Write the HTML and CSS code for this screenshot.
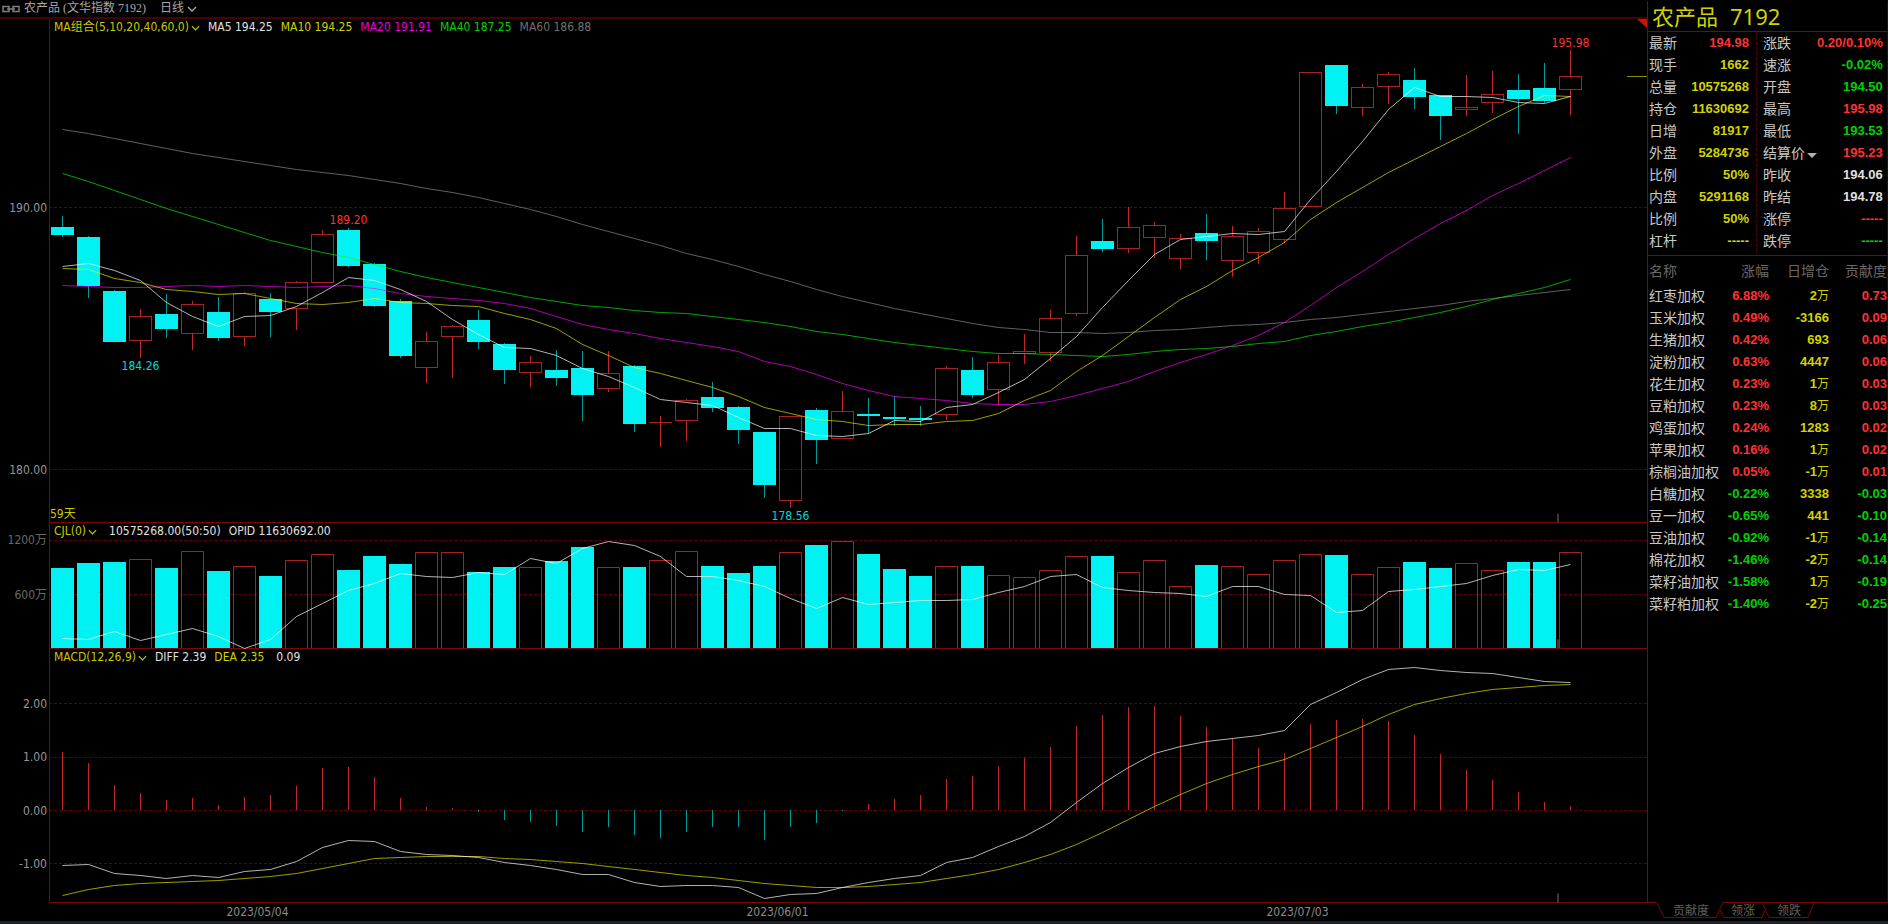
FILE: index.html
```html
<!DOCTYPE html>
<html lang="zh-CN">
<head>
<meta charset="utf-8">
<title>农产品 7192</title>
<link rel="stylesheet" href="styles.css">
</head>
<body>
<div class="app">
  <main class="stage">
    <header class="topbar">
      <svg class="link-icon" width="18" height="8" viewBox="0 0 18 8" aria-hidden="true"><rect x="1" y="1.5" width="6" height="5"/><rect x="11" y="1.5" width="6" height="5"/><path d="M5 4h8"/></svg>
      <h1 class="topbar-title">农产品<span>(文华指数</span> <span>7192)</span></h1>
      <span class="period">
        <select class="plain-select" aria-label="周期"><option>日线</option></select>
        <svg class="chev" width="10" height="6" viewBox="0 0 10 6" aria-hidden="true"><path d="M1 1l4 4 4-4"/></svg>
      </span>
    </header>

    <section class="panel price" aria-label="K线">
      <svg class="plot" id="price"></svg>
      <div class="legend">
        <button class="indicator" type="button">MA组合(5,10,20,40,60,0)<svg class="chev" width="9" height="6" viewBox="0 0 10 6" aria-hidden="true"><path d="M1 1l4 4 4-4"/></svg></button>
        <span class="white">MA5 194.25</span>
        <span class="yellow">MA10 194.25</span>
        <span class="magenta">MA20 191.91</span>
        <span class="green">MA40 187.25</span>
        <span class="dim">MA60 186.88</span>
      </div>
    </section>

    <section class="panel volume" aria-label="成交量">
      <svg class="plot" id="volume"></svg>
      <div class="legend">
        <button class="indicator" type="button">CJL(0)<svg class="chev" width="9" height="6" viewBox="0 0 10 6" aria-hidden="true"><path d="M1 1l4 4 4-4"/></svg></button>
        <span class="white spaced">10575268.00(50:50)</span>
        <span class="white">OPID 11630692.00</span>
      </div>
    </section>

    <section class="panel macd" aria-label="MACD">
      <svg class="plot" id="macd"></svg>
      <div class="legend">
        <button class="indicator" type="button">MACD(12,26,9)<svg class="chev" width="9" height="6" viewBox="0 0 10 6" aria-hidden="true"><path d="M1 1l4 4 4-4"/></svg></button>
        <span class="white">DIFF 2.39</span>
        <span class="yellow">DEA 2.35</span>
        <span class="white spaced">0.09</span>
      </div>
    </section>

    <svg class="dates" id="dates"></svg>
  </main>

  <aside class="side">
    <div class="side-body">
      <h2 class="quote-title">农产品<span>7192</span></h2>
      <div class="stats">
        <dl class="stat-col">
          <dt>最新</dt><dd class="red">194.98</dd>
          <dt>现手</dt><dd class="yellow">1662</dd>
          <dt>总量</dt><dd class="yellow">10575268</dd>
          <dt>持仓</dt><dd class="yellow">11630692</dd>
          <dt>日增</dt><dd class="yellow">81917</dd>
          <dt>外盘</dt><dd class="yellow">5284736</dd>
          <dt>比例</dt><dd class="yellow">50%</dd>
          <dt>内盘</dt><dd class="yellow">5291168</dd>
          <dt>比例</dt><dd class="yellow">50%</dd>
          <dt>杠杆</dt><dd class="yellow">-----</dd>
        </dl>
        <dl class="stat-col">
          <dt>涨跌</dt><dd class="red">0.20/0.10%</dd>
          <dt>速涨</dt><dd class="green">-0.02%</dd>
          <dt>开盘</dt><dd class="green">194.50</dd>
          <dt>最高</dt><dd class="red">195.98</dd>
          <dt>最低</dt><dd class="green">193.53</dd>
          <dt class="settle"><select class="plain-select" aria-label="价格类型"><option>结算价</option></select></dt><dd class="red">195.23</dd>
          <dt>昨收</dt><dd class="white">194.06</dd>
          <dt>昨结</dt><dd class="white">194.78</dd>
          <dt>涨停</dt><dd class="red">-----</dd>
          <dt>跌停</dt><dd class="green">-----</dd>
        </dl>
      </div>
      <table class="parts">
        <colgroup><col class="c-name"><col class="c-pct"><col class="c-qty"><col class="c-con"></colgroup>
        <thead><tr><th>名称</th><th>涨幅</th><th>日增仓</th><th>贡献度</th></tr></thead>
        <tbody>
          <tr class="up"><td>红枣加权</td><td>6.88%</td><td>2<i>万</i></td><td>0.73</td></tr>
          <tr class="up"><td>玉米加权</td><td>0.49%</td><td>-3166</td><td>0.09</td></tr>
          <tr class="up"><td>生猪加权</td><td>0.42%</td><td>693</td><td>0.06</td></tr>
          <tr class="up"><td>淀粉加权</td><td>0.63%</td><td>4447</td><td>0.06</td></tr>
          <tr class="up"><td>花生加权</td><td>0.23%</td><td>1<i>万</i></td><td>0.03</td></tr>
          <tr class="up"><td>豆粕加权</td><td>0.23%</td><td>8<i>万</i></td><td>0.03</td></tr>
          <tr class="up"><td>鸡蛋加权</td><td>0.24%</td><td>1283</td><td>0.02</td></tr>
          <tr class="up"><td>苹果加权</td><td>0.16%</td><td>1<i>万</i></td><td>0.02</td></tr>
          <tr class="up"><td>棕榈油加权</td><td>0.05%</td><td>-1<i>万</i></td><td>0.01</td></tr>
          <tr class="down"><td>白糖加权</td><td>-0.22%</td><td>3338</td><td>-0.03</td></tr>
          <tr class="down"><td>豆一加权</td><td>-0.65%</td><td>441</td><td>-0.10</td></tr>
          <tr class="down"><td>豆油加权</td><td>-0.92%</td><td>-1<i>万</i></td><td>-0.14</td></tr>
          <tr class="down"><td>棉花加权</td><td>-1.46%</td><td>-2<i>万</i></td><td>-0.14</td></tr>
          <tr class="down"><td>菜籽油加权</td><td>-1.58%</td><td>1<i>万</i></td><td>-0.19</td></tr>
          <tr class="down"><td>菜籽粕加权</td><td>-1.40%</td><td>-2<i>万</i></td><td>-0.25</td></tr>
        </tbody>
      </table>
    </div>
    <nav class="tabs">
      <svg class="tab-lines" width="241" height="19" viewBox="0 0 241 19" aria-hidden="true"><path d="M0 .5H10L17 15.5H69L76 .5H241M73 8L77 15.5H115L118 8M115 .5L122 15.5H161L167 .5"/></svg>
      <div class="tab-row">
        <button type="button">贡献度</button>
        <button type="button">领涨</button>
        <button type="button">领跌</button>
      </div>
    </nav>
  </aside>
</div>
<div class="statusbar"></div>
<script src="chart.js"></script>
</body>
</html>
```
FILE: styles.css
```css
* { box-sizing: border-box; }

body {
  margin: 0;
  min-height: 100vh;
  display: flex;
  flex-direction: column;
  background: #000;
  color: #c8c8c8;
  font: 12px/16px "DejaVu Sans Condensed", "Noto Sans", "Noto Sans CJK SC", sans-serif;
}

button, select {
  margin: 0;
  padding: 0;
  border: 0;
  background: none;
  color: inherit;
  font: inherit;
  cursor: pointer;
}

.plain-select { appearance: none; }
.plain-select option { background: #000; }

.app {
  flex: 1;
  display: grid;
  grid-template-columns: minmax(0, 1fr) 241px;
}

.statusbar { height: 3px; background: #20222a; }

.stage { display: flex; flex-direction: column; min-width: 0; }

.topbar {
  display: flex;
  align-items: center;
  height: 19px;
  padding-left: 2px;
  border-bottom: 2px solid #480000;
  color: #a8a8a8;
  font: 12px/17px "Liberation Serif", "Noto Sans CJK SC", serif;
}
.topbar-title {
  display: flex;
  gap: 3px;
  margin: 0 14px 0 4px;
  font: inherit;
}
.link-icon { fill: none; stroke: #808080; stroke-width: 1.5; }
.period { display: flex; align-items: center; gap: 2px; }

.chev { fill: none; stroke: currentColor; stroke-width: 1.3; }

.panel { display: grid; min-height: 0; }
.price { flex: 504 1 0; min-height: 252px; }
.volume { flex: 126 1 0; min-height: 63px; }
.macd { flex: 254 1 0; min-height: 127px; }
.plot, .legend { grid-area: 1 / 1; }
.plot { width: 100%; height: 100%; min-height: 0; }
.dates { width: 100%; height: 18px; }

.legend {
  display: flex;
  align-self: start;
  align-items: center;
  gap: 8px;
  height: 16px;
  padding-left: 54px;
  white-space: nowrap;
  z-index: 1;
}
.indicator { display: flex; align-items: center; gap: 2px; height: 16px; color: #c8c800; }
.indicator .chev { margin-top: 2px; }
.spaced { margin-left: 4px; }
.price .legend { height: 15px; }

.white { color: #e0e0e0; }
.yellow { color: #d2d200; }
.magenta { color: #e000e0; }
.green { color: #00d200; }
.dim { color: #707070; }
.red { color: #ff3232; }

.frame { stroke: #7a0808; }
.grid { stroke: #600000; stroke-dasharray: 3 2; }
.mark { stroke: #383838; }
.last { stroke: #8a8a00; }
.corner { fill: #c81400; }
.solid { fill: #00f2f2; }
.hollow { fill: none; stroke: #a82222; }
.wick-up { stroke: #c02828; }
.wick-down { stroke: #009a9a; }
.curve { fill: none; stroke-width: 1; }
.curve-white { stroke: #ffffff; stroke-opacity: .7; }
.curve-yellow { stroke: #ffff00; stroke-opacity: .62; }
.curve-magenta { stroke: #ff00ff; stroke-opacity: .68; }
.curve-green { stroke: #00ff00; stroke-opacity: .65; }
.curve-gray { stroke: #808080; stroke-opacity: .75; }
.axis { fill: #969696; text-anchor: end; }
.axis-dim { fill: #686868; text-anchor: end; }
.date { fill: #8c8c8c; text-anchor: middle; }
.tag { text-anchor: middle; }
.tag-high { fill: #ff3232; }
.tag-low { fill: #00d8d8; }
.days { fill: #c8c800; }

.side { display: flex; flex-direction: column; }
.side-body {
  flex: 1;
  margin-top: 1px;
  border-left: 1px solid #7a0808;
  border-right: 1px solid #4a0000;
}

.quote-title {
  display: flex;
  align-items: center;
  gap: 12px;
  height: 31px;
  margin: 0;
  padding-left: 4px;
  border-bottom: 1px solid #7a0808;
  color: #d2d200;
  font: 400 22px/30px "Noto Sans", "Noto Sans CJK SC", sans-serif;
}

.stats {
  display: grid;
  grid-template-columns: 108px 1fr;
  padding-bottom: 3px;
  border-bottom: 1px solid #7a0808;
  font: 14px/20px "Noto Sans CJK SC", sans-serif;
}
.stat-col {
  display: grid;
  grid-template-columns: auto 1fr;
  margin: 0;
  padding: 0 7px 0 1px;
}
.stat-col + .stat-col {
  padding: 0 6px;
  border-left: 1px dashed #5a0000;
}
.stat-col dt { height: 22px; }
.stat-col dd {
  height: 22px;
  margin: 0;
  text-align: right;
  font: bold 13px/22px "Liberation Sans", sans-serif;
}
.settle { display: flex; align-items: flex-start; gap: 2px; }
.settle::after {
  content: "";
  margin-top: 11px;
  border: 5px solid transparent;
  border-top-color: #b0b0b0;
  border-bottom: 0;
}

.parts {
  width: 100%;
  table-layout: fixed;
  border-collapse: collapse;
  white-space: nowrap;
}
.c-name { width: 72px; }
.c-pct { width: 49px; }
.c-qty { width: 60px; }
.parts th {
  height: 29px;
  padding: 0 0 2px;
  color: #686868;
  text-align: right;
  font: 14px/20px "Noto Sans CJK SC", sans-serif;
}
.parts td {
  height: 22px;
  padding: 0;
  text-align: right;
  font: bold 13px/22px "Liberation Sans", sans-serif;
}
.parts td:first-child {
  padding: 0 0 2px 1px;
  text-align: left;
  font: 14px/20px "Noto Sans CJK SC", sans-serif;
}
.parts th:first-child { padding-left: 1px; text-align: left; }
.parts td:nth-child(3) { color: #d2d200; }
.parts i { font: 12px/16px "Noto Sans CJK SC", sans-serif; }
.up { color: #ff3232; }
.down { color: #00d200; }
.parts td:first-child { color: #c8c8c8; }

.tabs { display: grid; height: 19px; }
.tab-lines, .tab-row { grid-area: 1 / 1; }
.tab-lines { fill: none; stroke: #7a0808; }
.tab-row {
  display: flex;
  gap: 22px;
  padding-left: 26px;
  color: #606060;
  font: 12px/16px "Noto Sans CJK SC", sans-serif;
}
.tab-row button { height: 16px; }
```
FILE: chart.js
```js
// Each bar: direction (u/d), high, body top, body bottom, low, volume top, histogram end.
// Levels are stage units counted down from the top edge.
const bars = [
  ['d',216,227,235,237,568,752],['d',236,237,286,298,563,763],['d',290,291,342,342,562,785],
  ['u',309,316,340,358,559,793],['d',294,314,329,338,568,800],['u',301,304,333,350,551,798],
  ['d',297,312,338,341,571,805],['u',292,293,336,346,566,797],['d',293,299,312,337,576,795],
  ['u',281,282,308,330,560,786],['u',230,234,282,283,554,768],['d',228,230,266,267,570,767],
  ['d',263,264,306,307,556,777],['d',299,301,356,358,564,798],['u',332,341,367,383,552,807],
  ['u',325,326,336,378,552,808],['d',310,320,342,349,572,812],['d',343,344,370,384,567,820],
  ['u',356,362,372,387,567,822],['d',350,370,378,386,561,826],['d',351,368,395,421,547,832],
  ['u',351,373,388,392,567,827],['d',365,366,424,432,567,835],['u',416,422,422,447,560,838],
  ['u',399,400,420,441,551,832],['d',382,397,408,412,566,827],['d',406,407,430,444,573,827],
  ['d',432,432,485,498,566,840],['u',416,416,500,508,552,827],['d',408,410,440,464,545,823],
  ['u',391,411,438,438,541,811],['d',398,414,416,434,554,804],['d',396,417,419,426,569,799],
  ['d',406,418,420,426,576,795],['u',366,368,414,420,566,779],['d',357,370,395,398,566,776],
  ['u',355,362,389,405,575,766],['u',334,351,353,364,577,758],['u',310,318,352,361,570,747],
  ['u',236,255,313,316,556,726],['d',219,241,249,252,556,715],['u',207,227,248,253,572,707],
  ['u',222,225,237,258,560,706],['u',234,238,258,269,586,716],['d',214,233,241,260,565,727],
  ['u',226,236,260,277,566,738],['u',228,231,252,264,574,748],['u',192,208,239,243,560,753],
  ['u',72,72,206,206,554,724],['d',65,65,106,114,555,720],['u',84,87,107,116,574,719],
  ['u',72,74,86,104,567,721],['d',68,80,97,109,562,735],['d',95,95,116,140,568,754],
  ['u',75,107,109,116,563,770],['u',71,94,102,113,570,780],['d',74,90,99,134,562,792],
  ['d',63,88,101,103,562,802],['u',50,76,89,115,552,806]
];

const ma5 = [266,263,270,280,302,316,326,316,315,306,292,277,280,289,301,319,334,347,348,355,368,376,387,399,402,405,417,428,428,435,436,433,420,421,407,404,392,379,358,336,307,280,254,239,236,233,234,231,199,171,141,109,87,96,96,97,102,103,96];
const ma10 = [268,269,278,282,289,291,294,293,298,303,304,302,298,302,303,305,306,313,319,328,344,355,367,373,380,387,396,407,413,419,421,425,424,424,421,420,413,400,390,371,355,336,317,299,286,270,257,242,219,202,187,172,159,146,133,119,106,95,96];
const ma20 = [285,286,287,287,286,285,286,285,286,287,286,285,288,293,296,298,300,303,308,316,324,329,333,338,342,346,351,361,366,374,383,390,396,398,400,403,404,404,401,395,388,381,371,362,354,345,335,322,305,287,271,254,238,223,210,195,183,170,157];
const ma40 = [173,181,190,199,208,216,224,232,240,246,252,257,264,271,277,282,287,292,297,301,305,307,310,312,313,316,319,322,326,331,334,338,342,345,348,351,353,353,354,355,356,354,351,349,348,346,343,341,335,331,326,322,317,312,306,299,293,287,279];
const ma60 = [129,133,138,143,148,153,157,161,165,169,172,175,179,183,188,192,197,203,209,216,224,231,238,245,253,259,266,274,281,289,296,302,308,313,318,323,327,329,332,332,333,332,330,329,327,325,324,322,319,317,314,311,308,305,301,298,295,292,289];
const openInterest = [638,639,631,640,634,628,636,648,639,616,603,590,583,573,576,577,572,574,558,563,548,541,545,556,576,576,580,586,598,608,597,604,602,600,600,599,592,586,576,574,587,590,592,593,596,586,586,594,595,612,610,591,589,586,583,575,569,570,564];
const diff = [865,864,873,875,878,875,877,871,869,861,847,840,841,851,854,855,857,862,865,869,874,874,882,886,885,885,887,898,894,893,887,882,878,875,862,857,846,836,822,802,783,767,753,746,741,738,735,730,704,692,679,669,667,670,672,673,677,681,682];
const dea = [895,889,885,883,882,881,880,878,876,873,868,863,858,857,856,856,856,858,859,861,863,866,869,872,875,877,880,883,885,887,887,886,884,882,878,874,869,862,854,844,832,819,806,794,783,774,766,759,748,737,726,714,704,698,693,689,687,685,684];

const AXIS = 49;
const ZERO = 810;

// A pane covers the stage levels from..from+span and maps them onto its own height.
function pane(id, from, span) {
  const svg = document.getElementById(id);
  const W = svg.clientWidth;
  const slot = (W - AXIS) * 26 / 1598;
  const k = svg.clientHeight / span;
  const out = [];
  const y = v => Math.round((v - from) * k);
  const x = i => AXIS + Math.round((i + 0.5) * slot) + 0.5;
  const p = {
    W, x, y, k, slot,
    half: Math.round(slot * 0.42),
    line: (cls, x1, y1, x2, y2) => out.push(`<line class="${cls}" x1="${x1}" y1="${y1}" x2="${x2}" y2="${y2}"/>`),
    rect: (cls, rx, ry, w, h) => out.push(`<rect class="${cls}" x="${rx}" y="${ry}" width="${w}" height="${h}"/>`),
    raw: s => out.push(s),
    text: (cls, tx, level, s) => out.push(`<text class="${cls}" x="${tx}" y="${y(level) + 4}">${s}</text>`),
    curve: (cls, data) => out.push(`<polyline class="curve ${cls}" points="${data.map((v, i) => x(i) + ',' + (y(v) + 0.5)).join(' ')}"/>`),
    gridline: level => p.line('grid', AXIS, y(level) + 0.5, W, y(level) + 0.5),
    frame: () => {
      const b = svg.clientHeight - 0.5;
      p.line('frame', AXIS + 0.5, 0, AXIS + 0.5, b);
      p.line('frame', AXIS, b, W, b);
      p.raw(`<line class="mark" x1="${x(57) + slot / 2 + 0.5}" x2="${x(57) + slot / 2 + 0.5}" y1="${b - 9}" y2="${b}" stroke-width="2"/>`);
    },
    done: () => { svg.innerHTML = out.join(''); }
  };
  return p;
}

function drawPrice() {
  const p = pane('price', 19, 504);
  [207, 469].forEach(p.gridline);
  p.frame();
  bars.forEach(([dir, high, top, bottom, low], i) => {
    const c = p.x(i), wick = dir === 'u' ? 'wick-up' : 'wick-down';
    p.line(wick, c, p.y(high), c, p.y(top));
    p.line(wick, c, p.y(bottom), c, p.y(low));
    if (dir === 'd') p.rect('solid', c - p.half - 0.5, p.y(top), p.half * 2 + 1, Math.max(2, p.y(bottom) - p.y(top)));
    else p.rect('hollow', c - p.half, p.y(top) + 0.5, p.half * 2, Math.max(0.1, p.y(bottom) - p.y(top)));
  });
  p.curve('curve-gray', ma60);
  p.curve('curve-green', ma40);
  p.curve('curve-magenta', ma20);
  p.curve('curve-yellow', ma10);
  p.curve('curve-white', ma5);
  p.text('axis', 47, 208, '190.00');
  p.text('axis', 47, 470, '180.00');
  p.text('tag tag-high', p.x(11), 220, '189.20');
  p.text('tag tag-low', p.x(3), 366, '184.26');
  p.text('tag tag-low', p.x(28), 516, '178.56');
  p.text('tag tag-high', p.x(58), 43, '195.98');
  p.text('days', AXIS + 1, 514, '59天');
  p.line('last', p.W - 20, p.y(76) + 0.5, p.W, p.y(76) + 0.5);
  p.raw(`<path class="corner" d="M${p.W - 10} 0H${p.W}V9z"/>`);
  p.done();
}

function drawVolume() {
  const p = pane('volume', 523, 126);
  [540, 594].forEach(p.gridline);
  const base = p.y(648);
  bars.forEach(([dir, , , , , vol], i) => {
    const c = p.x(i), t = p.y(vol);
    if (dir === 'd') p.rect('solid', c - p.half - 0.5, t, p.half * 2 + 1, base - t);
    else p.raw(`<path class="hollow" d="M${c - p.half} ${base}V${t + 0.5}H${c + p.half}V${base}"/>`);
  });
  p.frame();
  p.curve('curve-white', openInterest);
  p.text('axis-dim', 47, 540, '1200万');
  p.text('axis-dim', 47, 595, '600万');
  p.done();
}

function drawMacd() {
  const p = pane('macd', 649, 254);
  [703, 757, 810, 863].forEach(p.gridline);
  p.frame();
  bars.forEach((bar, i) => {
    const end = bar[6];
    p.line(end < ZERO ? 'wick-up' : 'wick-down', p.x(i), p.y(end), p.x(i), p.y(ZERO));
  });
  p.curve('curve-yellow', dea);
  p.curve('curve-white', diff);
  [[704, '2.00'], [757, '1.00'], [811, '0.00'], [864, '-1.00']].forEach(([v, s]) => p.text('axis', 47, v, s));
  p.done();
}

function drawDates() {
  const p = pane('dates', 903, 18);
  [[7, '2023/05/04'], [27, '2023/06/01'], [47, '2023/07/03']].forEach(([i, s]) => p.text('date', p.x(i) + p.slot / 2, 912, s));
  p.done();
}

function draw() {
  drawPrice();
  drawVolume();
  drawMacd();
  drawDates();
}

draw();
window.addEventListener('resize', draw);
```
